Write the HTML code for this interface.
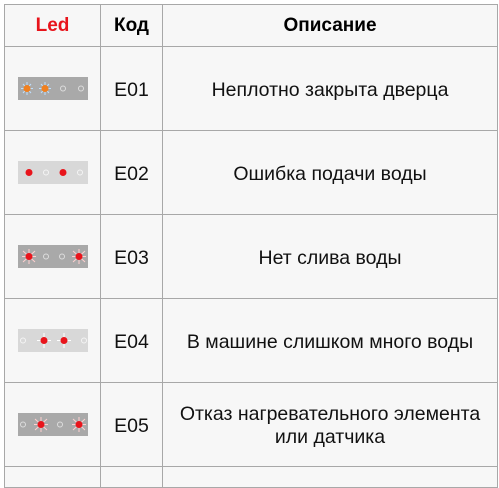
<!DOCTYPE html><html><head><meta charset="utf-8"><style>
body{margin:0;background:#fff;width:499px;height:472px;overflow:hidden;position:relative;font-family:"Liberation Sans",Roboto,sans-serif}
table{position:absolute;left:4px;top:4px;border-collapse:collapse;background:#f7f7f7}
td{border:1px solid #a8a8a8;text-align:center;padding:0;font-size:19.5px;color:#111;line-height:23px}
th{border:1px solid #a8a8a8;font-size:19px;height:41px;padding:0}
tr.r td{height:80px;padding-top:3px}
tr.r td:first-child{padding-top:0;height:83px}
svg{display:block;margin:auto}
</style></head><body>
<table>
<tr><th style="width:95px;color:#e8141b">Led</th><th style="width:61px">Код</th><th style="width:334px">Описание</th></tr>
<tr class="r"><td><svg width="70" height="23"><rect width="70" height="23" fill="#a9a9a9"/><g stroke="#bde0ff" stroke-width="1"><path d="M9 5v13M3 11.5h12M5 7l8 9M13 7l-8 9M27 5v13M21 11.5h12M23 7l8 9M31 7l-8 9"/></g><circle cx="9" cy="11.5" r="3.5" fill="#f08020"/><circle cx="27" cy="11.5" r="3.5" fill="#f08020"/><g fill="none" stroke="#ddd"><circle cx="45" cy="11.5" r="2.5"/><circle cx="63" cy="11.5" r="2.5"/></g></svg></td><td>E01</td><td>Неплотно закрыта дверца</td></tr>
<tr class="r"><td><svg width="70" height="23"><rect width="70" height="23" fill="#d8d8d8"/><circle cx="11" cy="11.5" r="3.5" fill="#e8141b"/><circle cx="45" cy="11.5" r="3.5" fill="#e8141b"/><g fill="none" stroke="#f4f4f4"><circle cx="28" cy="11.5" r="2.5"/><circle cx="62" cy="11.5" r="2.5"/></g></svg></td><td>E02</td><td>Ошибка подачи воды</td></tr>
<tr class="r"><td><svg width="70" height="23"><rect width="70" height="23" fill="#a9a9a9"/><g stroke="#ffd0d0"><path d="M11 4v15M4 11.5h14M5 6l12 11M17 6l-12 11M61 4v15M54 11.5h14M55 6l12 11M67 6l-12 11"/></g><circle cx="11" cy="11.5" r="3.5" fill="#e8141b"/><circle cx="61" cy="11.5" r="3.5" fill="#e8141b"/><g fill="none" stroke="#ddd"><circle cx="28" cy="11.5" r="2.5"/><circle cx="44" cy="11.5" r="2.5"/></g></svg></td><td>E03</td><td>Нет слива воды</td></tr>
<tr class="r"><td><svg width="70" height="23"><rect width="70" height="23" fill="#d8d8d8"/><g stroke="#fff"><path d="M26 4v15M19 11.5h14M46 4v15M39 11.5h14"/></g><circle cx="26" cy="11.5" r="3.5" fill="#e8141b"/><circle cx="46" cy="11.5" r="3.5" fill="#e8141b"/><g fill="none" stroke="#f4f4f4"><circle cx="5" cy="11.5" r="2.5"/><circle cx="66" cy="11.5" r="2.5"/></g></svg></td><td>E04</td><td>В машине слишком много воды</td></tr>
<tr class="r"><td><svg width="70" height="23"><rect width="70" height="23" fill="#a9a9a9"/><g stroke="#ffd0d0"><path d="M23 4v15M16 11.5h14M17 6l12 11M29 6l-12 11M61 4v15M54 11.5h14M55 6l12 11M67 6l-12 11"/></g><circle cx="23" cy="11.5" r="3.5" fill="#e8141b"/><circle cx="61" cy="11.5" r="3.5" fill="#e8141b"/><g fill="none" stroke="#ddd"><circle cx="5" cy="11.5" r="2.5"/><circle cx="42" cy="11.5" r="2.5"/></g></svg></td><td>E05</td><td>Отказ нагревательного элемента<br>или датчика</td></tr>
<tr><td style="height:20px"></td><td></td><td></td></tr>
</table>
</body></html>
